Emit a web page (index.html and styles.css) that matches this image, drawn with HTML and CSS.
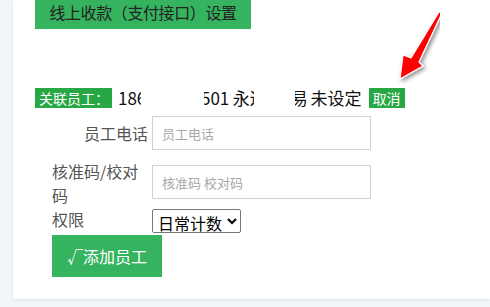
FILE: index.html
```html
<!DOCTYPE html>
<html lang="zh-CN">
<head>
  <meta charset="UTF-8">
  <meta name="viewport" content="width=device-width, initial-scale=1">
  <title>员工设置</title>
  <link rel="stylesheet" href="styles.css">
</head>
<body>
  <div class="card">
    <a class="pay-btn" href="#">线上收款（支付接口）设置</a>

    <div class="bind-row">
      <span class="tag">关联员工：</span>
      <span class="bind-text"><span class="cut w23">186</span><span class="gap g62"></span><span class="cut w25"><span class="shift3">501</span></span> 永<span class="cut w4">远</span><span class="gap g34"></span><span class="cut w12"><span class="shift4">易</span></span> 未设定</span>
      <span class="tag cancel">取消</span>
    </div>

    <div class="form">
      <div class="row row-phone">
        <label class="lbl lbl-right" for="phone">员工电话</label>
        <input class="field" type="text" id="phone" placeholder="员工电话">
      </div>
      <div class="row row-code">
        <label class="lbl" for="code">核准码/校对码</label>
        <input class="field" type="text" id="code" placeholder="核准码 校对码">
      </div>
      <div class="row row-role">
        <label class="lbl lbl-short" for="role">权限</label>
        <select id="role" class="role">
          <option>日常计数</option>
          <option>管理员</option>
        </select>
      </div>
      <button class="add-btn">√添加员工</button>
    </div>
  </div>

  <svg class="arrow" width="60" height="80" viewBox="380 5 60 80">
    <defs>
      <filter id="sh" x="-50%" y="-50%" width="200%" height="200%">
        <feDropShadow dx="2" dy="2" stdDeviation="2" flood-color="#000" flood-opacity="0.45"/>
      </filter>
    </defs>
    <polygon points="442,13 419,62 423,66 400,79 403,55 411,58 439,12" fill="#f00" stroke="#fff" stroke-width="1.2" stroke-linejoin="round" filter="url(#sh)"/>
  </svg>
</body>
</html>
```

FILE: styles.css
```css
body {
  margin: 0;
  background: #f3f6f9;
  font-family: "Noto Sans CJK SC", "Microsoft YaHei", sans-serif;
  color: #222;
  position: relative;
  height: 307px;
  overflow: hidden;
}
.card {
  background: #fff;
  margin-left: 13px;
  height: 299px;
  padding: 0 22px;
  box-shadow: 0 1px 3px rgba(0,0,0,0.08);
}
.pay-btn {
  display: inline-block;
  width: 216px;
  height: 29px;
  line-height: 24px;
  background: #35b35f;
  color: #222;
  text-align: center;
  font-size: 16px;
  letter-spacing: -0.4px;
  text-decoration: none;
}
.bind-row {
  margin-top: 59px;
  height: 20px;
  display: flex;
  align-items: center;
  white-space: nowrap;
}
.tag {
  display: inline-block;
  background: #28a745;
  color: #fff;
  font-size: 14px;
  line-height: 20px;
  height: 20px;
  padding: 0 4px;
  width: 69px;
}
.tag.cancel {
  width: auto;
  padding: 0 4px;
  margin-left: 7px;
}
.bind-text {
  font-size: 17px;
  line-height: 20px;
  margin-left: 6px;
  color: #111;
}
.cut {
  display: inline-block;
  overflow: hidden;
  vertical-align: top;
  white-space: nowrap;
}
.w23 { width: 23px; }
.w25 { width: 25px; }
.w4 { width: 4px; }
.w12 { width: 12px; }
.shift3 { margin-left: -3px; }
.shift4 { margin-left: -4px; }
.gap { display: inline-block; }
.g62 { width: 63px; }
.g34 { width: 41px; }

.form {
  padding-left: 17px;
}
.row {
  display: flex;
  align-items: flex-start;
}
.lbl {
  width: 96px;
  flex: none;
  font-size: 16px;
  line-height: 24px;
  color: #555;
  margin-right: 4px;
}
.lbl-right {
  text-align: right;
  line-height: 34px;
}
.row-phone {
  margin-top: 8px;
}
.row-code {
  margin-top: 9px;
}
.row-code .field {
  margin-top: 6px;
}
.row-role {
  margin-top: 2px;
}
.lbl-short {
  line-height: 20px;
}
.field {
  width: 219px;
  height: 34px;
  box-sizing: border-box;
  border: 1px solid #ccd2da;
  padding: 0 9px;
  font-size: 13px;
  font-family: inherit;
  outline: none;
}
.field::placeholder {
  color: #a5a8ac;
}
.role {
  height: 24px;
  width: 89px;
  font-size: 16px;
  font-family: inherit;
  color: #000;
  border: 1px solid #767676;
  border-radius: 2px;
  background: #fff;
  padding: 0 1px;
}
.add-btn {
  display: block;
  margin-top: 2px;
  width: 110px;
  height: 42px;
  background: #35b35f;
  color: #fff;
  border: none;
  font-size: 16px;
  font-family: inherit;
  cursor: pointer;
}
.arrow {
  position: absolute;
  left: 380px;
  top: 5px;
}
```
